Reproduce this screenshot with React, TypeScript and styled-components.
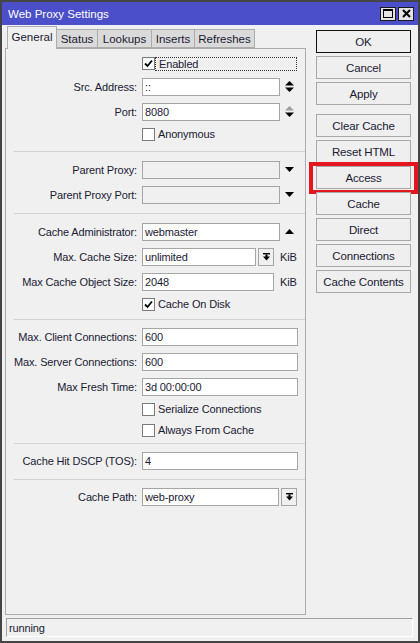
import React from "react";
import styled, { createGlobalStyle } from "styled-components";

const Global = createGlobalStyle`
  html, body { margin: 0; padding: 0; background: #f0f0f0; }
  body {
    font-family: "Liberation Sans", Arial, sans-serif;
    font-size: 11px;
    letter-spacing: -0.15px;
    color: #1a1a33;
  }
`;

const Window = styled.div`
  box-sizing: border-box;
  width: 420px;
  height: 643px;
  border: 2px solid #454545;
  background: #f0f0f0;
  display: flex;
  flex-direction: column;
`;

const TitleBar = styled.div`
  height: 23px;
  flex: none;
  background: #4b4fc9;
  color: #fff;
  display: flex;
  align-items: center;
  padding: 0 4px 0 6px;
  font-size: 11.5px;
  letter-spacing: 0;
`;

const TitleText = styled.div`
  flex: 1;
`;

const TitleButtons = styled.div`
  display: flex;
  gap: 2px;
`;

const TitleButton = styled.div`
  box-sizing: border-box;
  width: 16px;
  height: 14px;
  border: 1px solid #1a1a1a;
  background: #e4e4e4;
  display: flex;
  align-items: center;
  justify-content: center;
`;

const Main = styled.div`
  flex: 1;
  display: flex;
  padding: 1px 0 0 3px;
  min-height: 0;
`;

const LeftCol = styled.div`
  width: 301px;
  display: flex;
  flex-direction: column;
`;

const TabStrip = styled.div`
  height: 22px;
  display: flex;
  align-items: flex-end;
  padding-left: 2px;
  position: relative;
  z-index: 1;
`;

const Tab = styled.div<{ $w: number; $active?: boolean }>`
  box-sizing: border-box;
  width: ${(p) => p.$w}px;
  height: ${(p) => (p.$active ? 23 : 19)}px;
  margin-bottom: ${(p) => (p.$active ? -1 : 0)}px;
  margin-left: -1px;
  border: 1px solid #acacac;
  border-bottom: ${(p) => (p.$active ? "none" : "1px solid #acacac")};
  background: ${(p) => (p.$active ? "#f0f0f0" : "#dadada")};
  display: flex;
  align-items: center;
  justify-content: center;
  font-size: 11.5px;
  letter-spacing: 0;
  padding-bottom: ${(p) => (p.$active ? 2 : 0)}px;
  &:first-child { margin-left: 0; }
`;

const Panel = styled.div`
  flex: 1;
  box-sizing: border-box;
  border: 1px solid #acacac;
  background: #f0f0f0;
  display: flex;
  flex-direction: column;
`;

const Section = styled.div<{ $pt: number; $pb: number }>`
  padding-top: ${(p) => p.$pt}px;
  padding-bottom: ${(p) => p.$pb}px;
  display: flex;
  flex-direction: column;
`;

const Separator = styled.div`
  height: 1px;
  margin-left: 8px;
  background: #d2d2d2;
`;

const Row = styled.div`
  height: 25px;
  display: flex;
  align-items: center;
`;

const CheckRow = styled.div`
  height: 21px;
  display: flex;
  align-items: center;
  padding-left: 136px;
`;

const Label = styled.div`
  width: 131px;
  flex: none;
  margin-right: 5px;
  text-align: right;
  white-space: nowrap;
`;

const TextBox = styled.div<{ $w: number; $disabled?: boolean }>`
  box-sizing: border-box;
  width: ${(p) => p.$w}px;
  height: 18px;
  flex: none;
  border: 1px solid #a6a6a6;
  background: ${(p) => (p.$disabled ? "#f0f0f0" : "#fff")};
  padding: 0 2px;
  line-height: 16px;
  white-space: nowrap;
  overflow: hidden;
`;

const SideIcon = styled.div`
  margin-left: 5px;
  width: 9px;
  display: flex;
  align-items: center;
`;

const ListButton = styled.div`
  box-sizing: border-box;
  width: 16px;
  height: 18px;
  margin-left: 2px;
  border: 1px solid #a6a6a6;
  background: #f0f0f0;
  display: flex;
  align-items: center;
  justify-content: center;
`;

const Unit = styled.div`
  margin-left: 6px;
`;

const CheckBox = styled.div`
  box-sizing: border-box;
  width: 13px;
  height: 13px;
  flex: none;
  border: 1px solid #7a7a7a;
  background: #fff;
  display: flex;
  align-items: center;
  justify-content: center;
`;

const CheckText = styled.div<{ $focus?: boolean }>`
  box-sizing: border-box;
  margin-left: ${(p) => (p.$focus ? 0 : 3)}px;
  padding-left: ${(p) => (p.$focus ? 3 : 0)}px;
  width: ${(p) => (p.$focus ? "142px" : "auto")};
  height: 14px;
  line-height: 13px;
  border: ${(p) => (p.$focus ? "1px dotted #333" : "none")};
  white-space: nowrap;
`;

const RightCol = styled.div`
  width: 95px;
  margin-left: 10px;
  padding-top: 4px;
  display: flex;
  flex-direction: column;
  gap: 9px;
`;

const ButtonGroup = styled.div`
  display: flex;
  flex-direction: column;
  gap: 3px;
`;

const Button = styled.div<{ $default?: boolean; $highlight?: boolean }>`
  box-sizing: border-box;
  position: relative;
  height: 23px;
  border: 1px solid ${(p) => (p.$default ? "#111" : "#a8a8a8")};
  background: #efefef;
  display: flex;
  align-items: center;
  justify-content: center;
  font-size: 11.5px;
  white-space: nowrap;
  &::after {
    content: "";
    display: ${(p) => (p.$highlight ? "block" : "none")};
    position: absolute;
    top: -5px;
    left: -8px;
    right: -8px;
    bottom: -6px;
    border: 4px solid #e3161f;
  }
`;

const Footer = styled.div`
  flex: none;
  padding: 3px 5px 4px 4px;
`;

const StatusBar = styled.div`
  box-sizing: border-box;
  height: 19px;
  border: 1px solid #a0a0a0;
  border-right-color: #fff;
  border-bottom-color: #fff;
  padding-left: 2px;
  display: flex;
  align-items: center;
`;

const Spinner = ({ upColor = "#000" }: { upColor?: string }) => (
  <svg width="9" height="11" viewBox="0 0 9 11">
    <polygon points="0,4.5 4.5,0 9,4.5" fill={upColor} />
    <polygon points="0,6.5 9,6.5 4.5,11" fill="#000" />
  </svg>
);

const ArrowDown = () => (
  <svg width="9" height="5" viewBox="0 0 9 5">
    <polygon points="0,0 9,0 4.5,5" fill="#000" />
  </svg>
);

const ArrowUp = () => (
  <svg width="9" height="5" viewBox="0 0 9 5">
    <polygon points="0,5 9,5 4.5,0" fill="#000" />
  </svg>
);

const ListIcon = () => (
  <svg width="7" height="8" viewBox="0 0 7 8">
    <rect x="0" y="0" width="7" height="1.4" fill="#000" />
    <rect x="2.5" y="1.4" width="2" height="2.6" fill="#000" />
    <polygon points="0,3.6 7,3.6 3.5,7.6" fill="#000" />
  </svg>
);

const Tick = () => (
  <svg width="9" height="9" viewBox="0 0 9 9">
    <polyline points="1,4.5 3.5,7 8,1.5" fill="none" stroke="#000" strokeWidth="1.8" />
  </svg>
);

const Check = ({ label, checked, focus }: { label: string; checked?: boolean; focus?: boolean }) => (
  <CheckRow>
    <CheckBox>{checked && <Tick />}</CheckBox>
    <CheckText $focus={focus}>{label}</CheckText>
  </CheckRow>
);

const tabs = [
  { name: "General", w: 50, active: true },
  { name: "Status", w: 42 },
  { name: "Lookups", w: 55 },
  { name: "Inserts", w: 44 },
  { name: "Refreshes", w: 61 },
];

export default function App() {
  return (
    <>
      <Global />
      <Window>
        <TitleBar>
          <TitleText>Web Proxy Settings</TitleText>
          <TitleButtons>
            <TitleButton>
              <svg width="10" height="9" viewBox="0 0 10 9">
                <rect x="0.5" y="0.5" width="9" height="8" fill="none" stroke="#000" strokeWidth="1" />
                <rect x="0" y="0" width="10" height="2" fill="#000" />
              </svg>
            </TitleButton>
            <TitleButton>
              <svg width="9" height="9" viewBox="0 0 9 9">
                <path d="M1 1 L8 8 M8 1 L1 8" stroke="#000" strokeWidth="2" />
              </svg>
            </TitleButton>
          </TitleButtons>
        </TitleBar>
        <Main>
          <LeftCol>
            <TabStrip>
              {tabs.map((t) => (
                <Tab key={t.name} $w={t.w} $active={t.active}>
                  {t.name}
                </Tab>
              ))}
            </TabStrip>
            <Panel>
              <Section $pt={4} $pb={6}>
                <Check label="Enabled" checked focus />
                <Row>
                  <Label>Src. Address:</Label>
                  <TextBox $w={138}>::</TextBox>
                  <SideIcon><Spinner /></SideIcon>
                </Row>
                <Row>
                  <Label>Port:</Label>
                  <TextBox $w={138}>8080</TextBox>
                  <SideIcon><Spinner upColor="#a0a0a0" /></SideIcon>
                </Row>
                <Check label="Anonymous" />
              </Section>
              <Separator />
              <Section $pt={5} $pb={6}>
                <Row>
                  <Label>Parent Proxy:</Label>
                  <TextBox $w={138} $disabled />
                  <SideIcon><ArrowDown /></SideIcon>
                </Row>
                <Row>
                  <Label>Parent Proxy Port:</Label>
                  <TextBox $w={138} $disabled />
                  <SideIcon><ArrowDown /></SideIcon>
                </Row>
              </Section>
              <Separator />
              <Section $pt={5} $pb={4}>
                <Row>
                  <Label>Cache Administrator:</Label>
                  <TextBox $w={138}>webmaster</TextBox>
                  <SideIcon><ArrowUp /></SideIcon>
                </Row>
                <Row>
                  <Label>Max. Cache Size:</Label>
                  <TextBox $w={114}>unlimited</TextBox>
                  <ListButton><ListIcon /></ListButton>
                  <Unit>KiB</Unit>
                </Row>
                <Row>
                  <Label>Max Cache Object Size:</Label>
                  <TextBox $w={132}>2048</TextBox>
                  <Unit>KiB</Unit>
                </Row>
                <Check label="Cache On Disk" checked />
              </Section>
              <Separator />
              <Section $pt={4} $pb={2}>
                <Row>
                  <Label>Max. Client Connections:</Label>
                  <TextBox $w={156}>600</TextBox>
                </Row>
                <Row>
                  <Label>Max. Server Connections:</Label>
                  <TextBox $w={156}>600</TextBox>
                </Row>
                <Row>
                  <Label>Max Fresh Time:</Label>
                  <TextBox $w={156}>3d 00:00:00</TextBox>
                </Row>
                <Check label="Serialize Connections" />
                <Check label="Always From Cache" />
              </Section>
              <Separator />
              <Section $pt={4} $pb={6}>
                <Row>
                  <Label>Cache Hit DSCP (TOS):</Label>
                  <TextBox $w={156}>4</TextBox>
                </Row>
              </Section>
              <Separator />
              <Section $pt={4} $pb={0}>
                <Row>
                  <Label>Cache Path:</Label>
                  <TextBox $w={137}>web-proxy</TextBox>
                  <ListButton><ListIcon /></ListButton>
                </Row>
              </Section>
            </Panel>
          </LeftCol>
          <RightCol>
            <ButtonGroup>
              <Button $default>OK</Button>
              <Button>Cancel</Button>
              <Button>Apply</Button>
            </ButtonGroup>
            <ButtonGroup>
              <Button>Clear Cache</Button>
              <Button>Reset HTML</Button>
              <Button $highlight>Access</Button>
              <Button>Cache</Button>
              <Button>Direct</Button>
              <Button>Connections</Button>
              <Button>Cache Contents</Button>
            </ButtonGroup>
          </RightCol>
        </Main>
        <Footer>
          <StatusBar>running</StatusBar>
        </Footer>
      </Window>
    </>
  );
}
